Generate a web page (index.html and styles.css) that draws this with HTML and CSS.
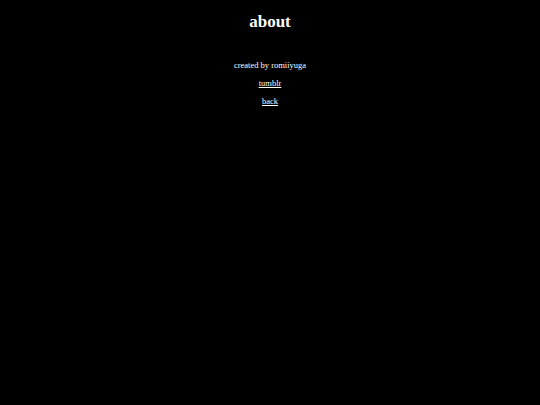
FILE: index.html
```html
<!DOCTYPE html>
<html>
<head>
<meta charset="utf-8">
<link rel="stylesheet" href="styles.css">
</head>
<body>
<div class="page">
<h1 class="title">about</h1>
<p class="line">created by romiiyuga</p>
<p class="line"><a class="link" href="#">tumblr</a></p>
<p class="line"><a class="link" href="#">back</a></p>
</div>
</body>
</html>
```
FILE: styles.css
```css
html, body {
  margin: 0;
  padding: 0;
  background: #000;
  height: 100%;
}
.page {
  padding-top: 12px;
  text-align: center;
  color: #fff;
  font-family: "Liberation Serif", "Times New Roman", serif;
}
.title {
  font-size: 17px;
  font-weight: bold;
  margin: 0 0 28px 0;
  line-height: 20px;
}
.line {
  font-size: 8.5px;
  line-height: 10px;
  margin: 0 0 8px 0;
}
.link {
  color: #fff;
  text-decoration: underline;
}
```
